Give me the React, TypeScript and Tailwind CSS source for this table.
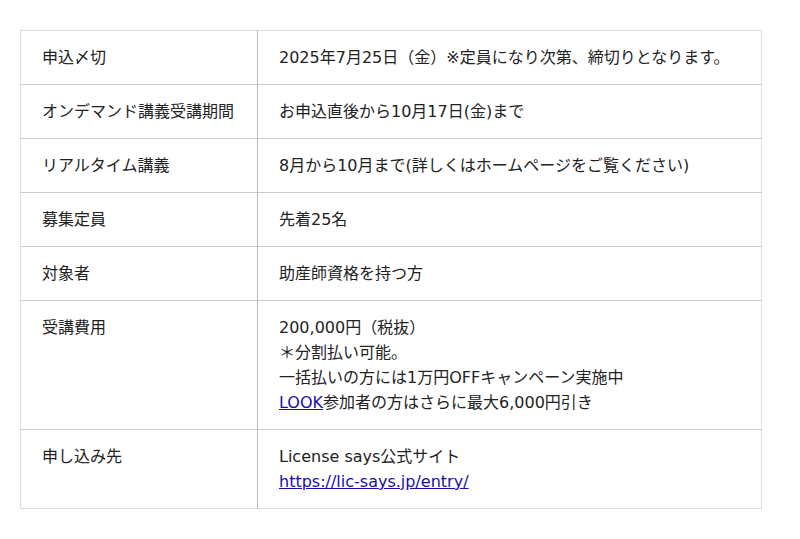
import React from "react";

const rows: { label: string; value: React.ReactNode }[] = [
  { label: "申込〆切", value: "2025年7月25日（金）※定員になり次第、締切りとなります。" },
  { label: "オンデマンド講義受講期間", value: "お申込直後から10月17日(金)まで" },
  { label: "リアルタイム講義", value: "8月から10月まで(詳しくはホームページをご覧ください)" },
  { label: "募集定員", value: "先着25名" },
  { label: "対象者", value: "助産師資格を持つ方" },
  {
    label: "受講費用",
    value: (
      <>
        200,000円（税抜）
        <br />
        ＊分割払い可能。
        <br />
        一括払いの方には1万円OFFキャンペーン実施中
        <br />
        <a href="#" className="text-[#1a0dab] underline">
          LOOK
        </a>
        参加者の方はさらに最大6,000円引き
      </>
    ),
  },
  {
    label: "申し込み先",
    value: (
      <>
        License says公式サイト
        <br />
        <a href="#" className="text-[#1a0dab] underline">
          https://lic-says.jp/entry/
        </a>
      </>
    ),
  },
];

export default function App() {
  return (
    <div className="min-h-screen bg-white px-5 pt-[30px] font-['DejaVu_Sans','Noto_Sans_CJK_JP',sans-serif] text-[16px] leading-[25px] text-[#222]">
      <table className="w-[742px] border-collapse border border-[#ddd]">
        <tbody>
          {rows.map((r) => (
            <tr key={r.label} className="border-b border-[#ccc] last:border-b-[#ddd]">
              <td className="w-[237px] border-r border-[#bbb] px-[21px] py-[14px] align-top">{r.label}</td>
              <td className="px-[21px] py-[14px] align-top">{r.value}</td>
            </tr>
          ))}
        </tbody>
      </table>
    </div>
  );
}
